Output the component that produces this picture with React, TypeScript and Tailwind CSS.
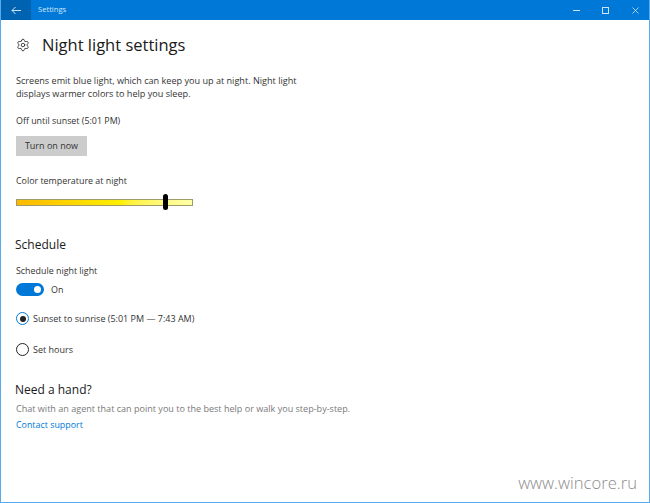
import { Settings } from 'lucide-react';

export default function App() {
  return (
    <div
      className="w-[650px] h-[503px] flex flex-col bg-white border-x border-b border-[#5aa9ea] relative overflow-hidden text-[#1a1a1a]"
      style={{ fontFamily: '"Open Sans", "Noto Sans", sans-serif' }}
    >
      {/* Title bar */}
      <div className="h-5 -mx-px flex items-center bg-[#0078d7] text-white shrink-0">
        <div className="w-[31px] h-5 bg-[#0063b1] flex items-center justify-center">
          <svg width="10" height="9" viewBox="0 0 10 9" fill="none" stroke="#cfe4f7" strokeWidth="1">
            <path d="M10 4.5H1M4.5 1L1 4.5L4.5 8" />
          </svg>
        </div>
        <span className="ml-[7px] text-[7.6px] text-[#d5e8f8]">Settings</span>
        <div className="ml-auto flex items-center">
          <div className="w-[7px] h-px bg-[#cfe4f7] mr-[22px]" />
          <div className="w-[7px] h-[7px] border border-[#cfe4f7] mr-[23px]" />
          <svg className="mr-[11px]" width="7" height="7" viewBox="0 0 7 7" stroke="#cfe4f7" strokeWidth="0.8">
            <path d="M0.5 0.5L6.5 6.5M6.5 0.5L0.5 6.5" />
          </svg>
        </div>
      </div>

      <div className="flex-1 pl-[15px] flex flex-col">
        {/* Heading */}
        <div className="flex items-center h-[22px] mt-[14px]">
          <Settings className="w-[14px] h-[14px] text-[#222]" strokeWidth={1.4} />
          <h1 className="ml-[12px] text-[16.5px] leading-[22px] font-normal">Night light settings</h1>
        </div>

        <p className="mt-[18px] text-[9.1px] leading-[13px] w-[300px] text-[#333]">
          Screens emit blue light, which can keep you up at night. Night light displays warmer colors to help you sleep.
        </p>

        <p className="mt-[14px] text-[8.9px] leading-[13px] text-[#333]">Off until sunset (5:01 PM)</p>

        <button className="mt-[9px] w-[71px] h-5 bg-[#cccccc] text-[9px] text-[#333] flex items-center justify-center">
          Turn on now
        </button>

        <p className="mt-[18px] text-[8.9px] leading-[13px] text-[#333]">Color temperature at night</p>

        {/* Temperature slider */}
        <div className="mt-[7px] relative w-[177px] h-4 flex items-center">
          <div className="w-full h-[7px] border border-[#a09a6a] bg-gradient-to-r from-[#ffb900] via-[#fff000] via-60% to-[#ffffa8]" />
          <div className="absolute left-[147px] top-0 w-[5px] h-4 rounded-full bg-black" />
        </div>

        <h2 className="mt-[26px] -ml-px text-[12px] leading-[17px] font-normal">Schedule</h2>

        <p className="mt-[11px] text-[8.9px] leading-[13px] text-[#333]">Schedule night light</p>

        {/* Toggle */}
        <div className="mt-[6px] flex items-center h-[13px]">
          <div className="w-7 h-[13px] rounded-full bg-[#0078d7] flex items-center justify-end pr-[3px]">
            <div className="w-[7px] h-[7px] rounded-full bg-white" />
          </div>
          <span className="ml-[7px] text-[8.9px] text-[#333]">On</span>
        </div>

        {/* Radios */}
        <div className="mt-[16px] flex items-center h-[13px]">
          <div className="w-[13px] h-[13px] rounded-full border border-[#0078d7] flex items-center justify-center">
            <div className="w-[6px] h-[6px] rounded-full bg-[#222]" />
          </div>
          <span className="ml-[4px] text-[9px] text-[#333]">Sunset to sunrise (5:01 PM — 7:43 AM)</span>
        </div>

        <div className="mt-[18px] flex items-center h-[13px]">
          <div className="w-[13px] h-[13px] rounded-full border border-[#222]" />
          <span className="ml-[4px] text-[9px] text-[#333]">Set hours</span>
        </div>

        <h2 className="mt-[25px] -ml-px text-[12px] leading-[17px] font-normal">Need a hand?</h2>

        <p className="mt-[4px] text-[9.05px] leading-[13px] text-[#7a7a7a]">
          Chat with an agent that can point you to the best help or walk you step-by-step.
        </p>
        <a className="mt-[3px] text-[8.9px] leading-[13px] text-[#0078d7]">Contact support</a>
      </div>

      {/* Watermark */}
      <span className="absolute right-[12px] bottom-[6px] text-[16.6px] font-light text-[#8c8c8c]">www.wincore.ru</span>
    </div>
  );
}
